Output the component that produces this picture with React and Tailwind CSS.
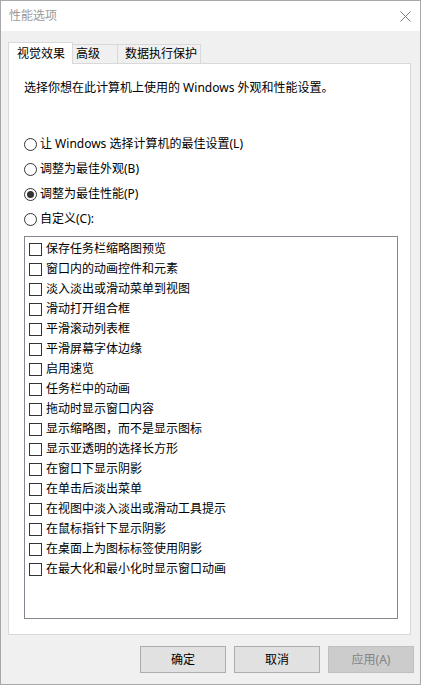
const effects = [
  "保存任务栏缩略图预览",
  "窗口内的动画控件和元素",
  "淡入淡出或滑动菜单到视图",
  "滑动打开组合框",
  "平滑滚动列表框",
  "平滑屏幕字体边缘",
  "启用速览",
  "任务栏中的动画",
  "拖动时显示窗口内容",
  "显示缩略图，而不是显示图标",
  "显示亚透明的选择长方形",
  "在窗口下显示阴影",
  "在单击后淡出菜单",
  "在视图中淡入淡出或滑动工具提示",
  "在鼠标指针下显示阴影",
  "在桌面上为图标标签使用阴影",
  "在最大化和最小化时显示窗口动画",
];

const options = [
  { label: "让 Windows 选择计算机的最佳设置(L)", checked: false },
  { label: "调整为最佳外观(B)", checked: false },
  { label: "调整为最佳性能(P)", checked: true },
  { label: "自定义(C):", checked: false },
];

const Radio = ({ checked }) => (
  <span className="flex h-[13px] w-[13px] shrink-0 items-center justify-center rounded-full border border-[#333333] bg-white">
    {checked && <span className="h-[7px] w-[7px] rounded-full bg-[#333333]" />}
  </span>
);

const App = () => {
  return (
    <div className="flex h-[685px] w-[421px] flex-col border border-[#a8a8a8] bg-[#f0f0f0] font-['Noto_Sans','Noto_Sans_CJK_SC',sans-serif] text-[12px] leading-4 text-black">
      {/* Title bar */}
      <div className="flex h-[30px] shrink-0 items-center justify-between bg-white pl-[8px] pr-[9px]">
        <span className="text-[#9a9a9a]">性能选项</span>
        <svg width="11" height="11" viewBox="0 0 11 11">
          <path d="M0.5 0.5L10.5 10.5M10.5 0.5L0.5 10.5" stroke="#7a7a7a" strokeWidth="1" />
        </svg>
      </div>

      {/* Body */}
      <div className="flex flex-1 flex-col pl-[7px] pr-[9px] pt-[11px] pb-[11px]">
        {/* Tabs */}
        <div className="flex h-[21px] items-end">
          <div className="relative z-10 -mb-px flex h-[22px] w-[65px] items-center border-l border-r border-t border-[#d9d9d9] bg-white pl-[8px]">
            视觉效果
          </div>
          <div className="flex h-[19px] w-[45px] items-center border-r border-t border-[#d9d9d9] pl-[3px]">
            高级
          </div>
          <div className="flex h-[19px] w-[83px] items-center border-r border-t border-[#d9d9d9] pl-[7px]">
            数据执行保护
          </div>
        </div>

        {/* Panel */}
        <div className="flex flex-1 flex-col border border-[#d9d9d9] bg-white pl-[15px] pr-[12px] pt-[16px] pb-[15px]">
          <p>选择你想在此计算机上使用的 Windows 外观和性能设置。</p>

          <div className="mt-[40px] flex flex-col gap-[9px]">
            {options.map((opt) => (
              <div key={opt.label} className="flex h-4 items-center gap-[3px]">
                <Radio checked={opt.checked} />
                <span>{opt.label}</span>
              </div>
            ))}
          </div>

          {/* List box */}
          <div className="mt-[9px] flex-1 border border-[#828790] bg-white pl-[4px] pt-[2px]">
            {effects.map((item) => (
              <div key={item} className="flex h-5 items-center gap-[4px]">
                <span className="h-[13px] w-[13px] shrink-0 border border-[#333333] bg-white" />
                <span>{item}</span>
              </div>
            ))}
          </div>
        </div>

        {/* Buttons */}
        <div className="mt-[11px] flex h-[27px] justify-end gap-2">
          <button className="w-[86px] border border-[#adadad] bg-[#e1e1e1]">确定</button>
          <button className="w-[86px] border border-[#adadad] bg-[#e1e1e1]">取消</button>
          <button className="-mr-[3px] w-[86px] border border-[#bfbfbf] bg-[#cccccc] text-[#838383]" disabled>
            应用(A)
          </button>
        </div>
      </div>
    </div>
  );
};

export default App;
